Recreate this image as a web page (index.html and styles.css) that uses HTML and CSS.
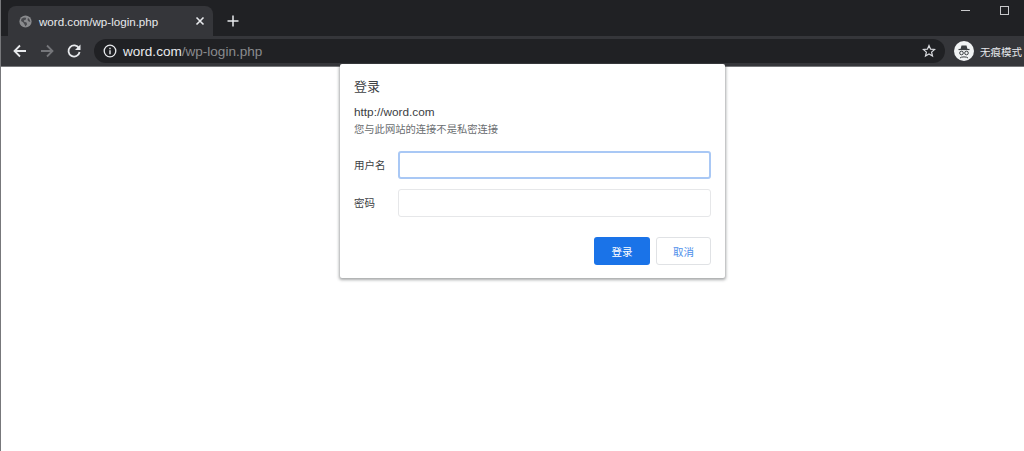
FILE: index.html
```html
<!DOCTYPE html>
<html lang="zh">
<head>
<meta charset="utf-8">
<title>word.com/wp-login.php</title>
<link rel="stylesheet" href="styles.css">
</head>
<body>
<div class="browser">
  <header class="chrome">
    <div class="tabstrip">
      <div class="tab">
        <svg class="favicon" width="16" height="16" viewBox="0 0 16 16"><circle cx="8" cy="8" r="7.5" fill="#8a8b8e"/><path d="M3 4.5 6 3l3 .5-1 2.5-2 .5.5 2 2.500.5 1 2.500-2 2.500L6.500 11 5 9 2.500 7.500z M11 3.500l2 2 1 3-2-.5-1.500-2z" fill="#4a4b4f"/></svg>
        <span class="tab-title">word.com/wp-login.php</span>
        <svg class="tab-close" width="10" height="10" viewBox="0 0 10 10"><path d="M1.500 1.500l7 7M8.500 1.500l-7 7" stroke="#e8eaed" stroke-width="1.600"/></svg>
      </div>
      <svg class="new-tab" width="12" height="12" viewBox="0 0 12 12"><path d="M6 .5v11M.5 6h11" stroke="#e8eaed" stroke-width="1.500"/></svg>
      <div class="window-controls">
        <span class="win-min"></span>
        <span class="win-max"></span>
      </div>
    </div>
    <div class="toolbar">
      <svg class="nav" width="16" height="16" viewBox="0 0 16 16"><path d="M14 8H2.500M8 2.500 2.500 8 8 13.500" fill="none" stroke="#e8eaed" stroke-width="1.800"/></svg>
      <svg class="nav" width="16" height="16" viewBox="0 0 16 16"><path d="M2 8h11.500M8 2.500 13.500 8 8 13.500" fill="none" stroke="#75767a" stroke-width="1.800"/></svg>
      <svg class="nav" width="16" height="16" viewBox="0 0 16 16"><path d="M13 5.200A5.600 5.600 0 1 0 13.600 9" fill="none" stroke="#e8eaed" stroke-width="1.800"/><path d="M14.500 1.500v5.500H9z" fill="#e8eaed"/></svg>
      <div class="omnibox">
        <svg class="info" width="14" height="14" viewBox="0 0 14 14"><circle cx="7" cy="7" r="5.800" fill="none" stroke="#e8eaed" stroke-width="1.300"/><path d="M7 6.200v4M7 3.700v1.500" stroke="#e8eaed" stroke-width="1.400"/></svg>
        <span class="url"><span class="url-host">word.com</span>/wp-login.php</span>
        <svg class="star" width="14" height="14" viewBox="0 0 14 14"><path d="M7 1.500l1.600 3.700 4 .3-3 2.600.9 3.900L7 10l-3.500 2 .9-3.900-3-2.600 4-.3z" fill="none" stroke="#dadce0" stroke-width="1.200"/></svg>
      </div>
      <div class="profile">
        <svg width="20" height="20" viewBox="0 0 20 20"><circle cx="10" cy="10" r="10" fill="#f1f3f4"/><path d="M6.500 8 7.500 4.500h5L13.500 8z" fill="#3c4043"/><path d="M4.500 8.500h11" stroke="#3c4043" stroke-width="1.200"/><circle cx="7.500" cy="12" r="1.800" fill="none" stroke="#3c4043" stroke-width="1"/><circle cx="12.500" cy="12" r="1.800" fill="none" stroke="#3c4043" stroke-width="1"/><path d="M6 17c1-1.500 7-1.500 8 0" stroke="#3c4043" fill="none"/></svg>
        <span class="profile-label">无痕模式</span>
      </div>
    </div>
  </header>
  <main class="page"></main>
  <form class="dialog">
    <h1 class="dialog-title">登录</h1>
    <p class="origin">http://word.com</p>
    <p class="warning">您与此网站的连接不是私密连接</p>
    <div class="fields">
      <label class="field-label">用户名</label>
      <div class="input input-focus"></div>
      <label class="field-label">密码</label>
      <div class="input"></div>
    </div>
    <div class="actions">
      <button type="button" class="btn btn-primary">登录</button>
      <button type="button" class="btn btn-cancel">取消</button>
    </div>
  </form>
</div>
</body>
</html>
```
FILE: styles.css
```css
* { box-sizing: border-box; }
html, body { margin: 0; height: 100%; }
body { font-family: "Liberation Sans", "Noto Sans CJK SC", sans-serif; background: #fff; overflow: hidden; }
.browser { position: relative; width: 1024px; height: 451px; display: flex; flex-direction: column; border-left: 1px solid #77787b; }
.chrome { background: #35363a; border-bottom: 1px solid #77787b; height: 67px; flex: none; }
.tabstrip { height: 36px; background: #202124; display: flex; align-items: flex-end; padding-left: 7px; }
.tab { width: 205px; height: 30px; background: #35363a; border-radius: 8px 8px 0 0; display: flex; align-items: center; padding: 0 8px 0 11px; color: #e8eaed; font-size: 11.600px; }
.favicon { margin-right: 7px; flex: none; width: 13px; height: 13px; }
.tab-title { flex: 1; white-space: nowrap; }
.tab-close { flex: none; }
.new-tab { margin: 0 0 9px 14px; flex: none; }
.window-controls { margin-left: auto; align-self: flex-start; display: flex; align-items: center; gap: 30px; padding: 6px 15px 0 0; }
.win-min { width: 9px; height: 1px; background: #c8c9cb; }
.win-max { width: 9px; height: 9px; border: 1px solid #c8c9cb; }
.toolbar { height: 30px; display: flex; align-items: center; padding-left: 11px; }
.nav { margin-right: 11px; flex: none; width: 16px; height: 16px; }
.omnibox { width: 851px; height: 24px; border-radius: 12px; background: #202124; display: flex; align-items: center; padding: 0 9px 0 9px; margin-left: 1px; }
.info { flex: none; margin-right: 6px; }
.url { flex: 1; color: #8a8b8e; font-size: 13.550px; white-space: nowrap; }
.url-host { color: #e8eaed; }
.star { flex: none; }
.profile { display: flex; align-items: center; margin-left: 9px; gap: 6px; }
.profile-label { color: #e8eaed; font-size: 10.500px; white-space: nowrap; }
.page { flex: 1; }
.dialog { position: absolute; left: 339px; top: 64px; width: 385px; height: 214px; background: #fff; border-radius: 2px; box-shadow: 0 1px 3px 1px rgba(60,64,67,.45); padding: 14px 14px 0; color: #3c4043; }
.dialog-title { margin: 0; font-size: 13px; font-weight: 400; line-height: 18px; color: #3c4043; }
.origin { margin: 8px 0 0; font-size: 11.800px; line-height: 16px; color: #3c4043; }
.warning { margin: 2px 0 0; font-size: 10.300px; line-height: 16px; color: #6a6d70; }
.fields { display: grid; grid-template-columns: 44px 1fr; row-gap: 10px; align-items: center; margin-top: 13px; }
.field-label { font-size: 10.500px; color: #3c4043; padding-bottom: 2px; }
.input { height: 28px; border: 1px solid #e6e7e9; border-radius: 3px; }
.input-focus { border: 2px solid #a9c8f5; }
.actions { display: flex; justify-content: flex-end; gap: 6px; margin-top: 20px; }
.btn { height: 28px; border-radius: 3px; font: inherit; font-size: 10.500px; cursor: pointer; padding: 0; }
.btn-primary { width: 56px; background: #1a73e8; color: #fff; border: none; }
.btn-cancel { width: 55px; background: #fff; color: #4d8eea; border: 1px solid #e0e2e5; }
```
